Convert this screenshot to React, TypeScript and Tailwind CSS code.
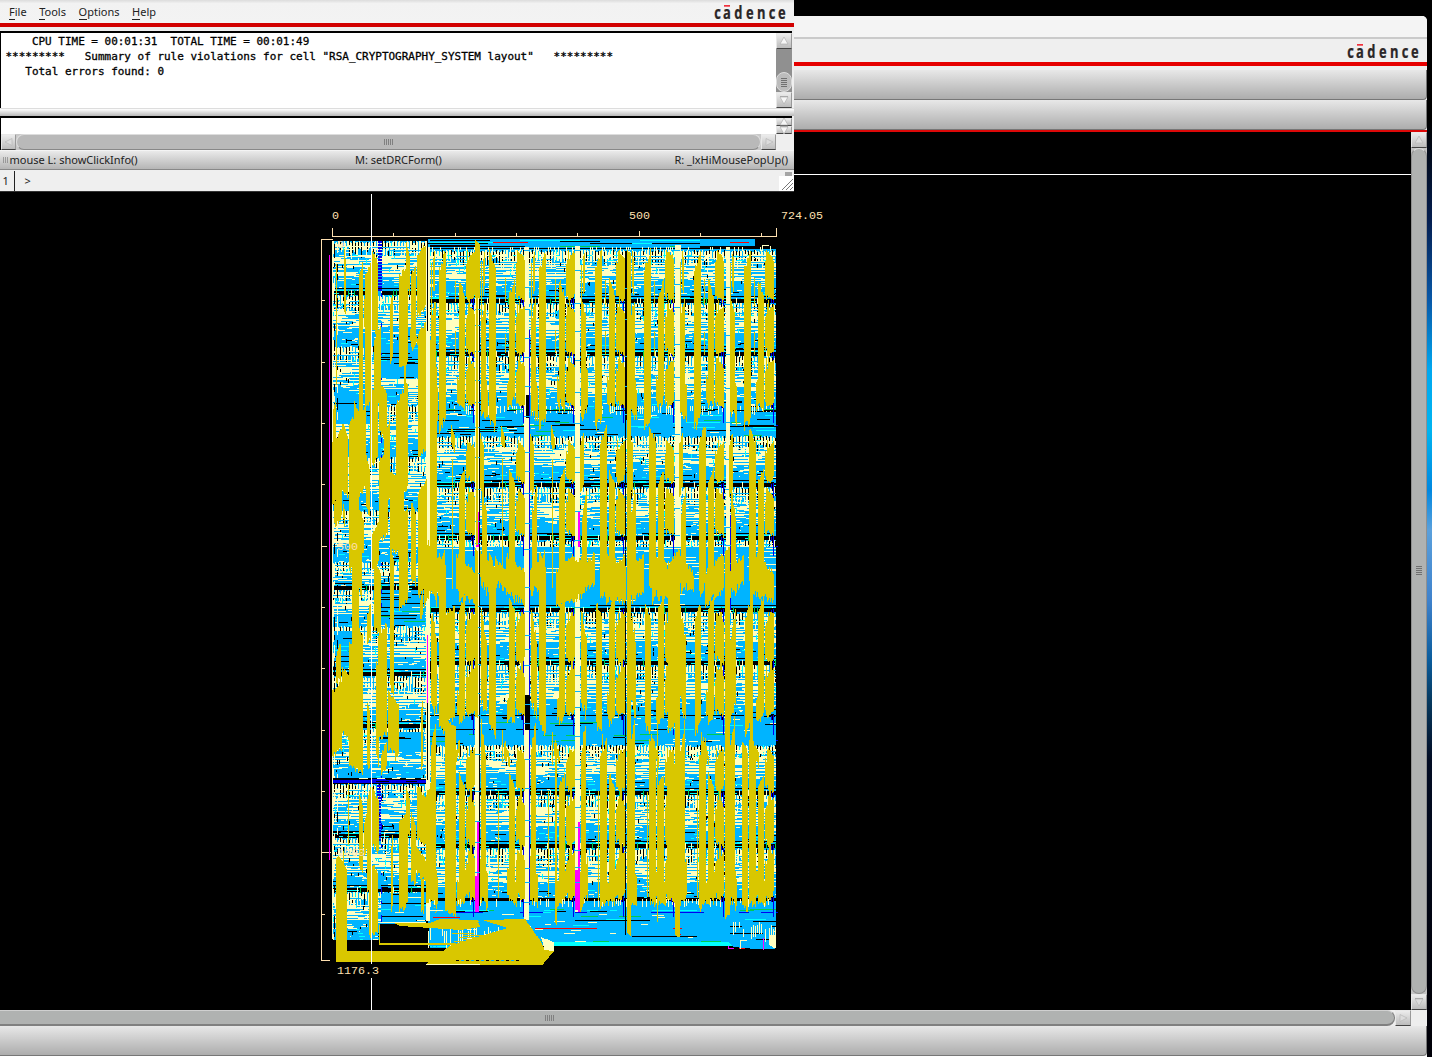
import React from "react";

const X0 = 318;
const Y0 = 226;
const W = 464;
const H = 744;

const NONE = 0, BLUE = 1, CREAM = 2, YEL = 3, CYAN = 4, BLACK = 5, GREEN = 6, NAVY = 7, MAG = 8, RED = 9, PEACH = 10;
const COLORS = ["", "#00b4ff", "#ffffc0", "#d9c700", "#00ffff", "#000000", "#00cc50", "#0000f0", "#ff00ff", "#ff0000", "#ffe0b0"];

function buildChip(): string[] {
  const g = new Uint8Array(W * H);
  let seed = 90210;
  const rnd = () => {
    seed = (seed * 1664525 + 1013904223) >>> 0;
    return seed / 4294967296;
  };
  const box = (x: number, y: number, w: number, h: number, c: number) => {
    for (let j = y; j < y + h; j++)
      for (let i = x; i < x + w; i++) {
        const a = i - X0, b = j - Y0;
        if (a >= 0 && b >= 0 && a < W && b < H) g[b * W + a] = c;
      }
  };
  const ri = (a: number, b: number) => Math.floor(a + rnd() * (b - a));
  const poly = (pts: number[][], c: number) => {
    const ys = pts.map((p) => p[1]);
    for (let y = Math.min(...ys); y <= Math.max(...ys); y++) {
      const xs: number[] = [];
      for (let k = 0; k < pts.length; k++) {
        const [ax, ay] = pts[k];
        const [bx, by] = pts[(k + 1) % pts.length];
        if (ay <= y + 0.5 !== by <= y + 0.5) xs.push(ax + ((y + 0.5 - ay) / (by - ay)) * (bx - ax));
      }
      xs.sort((p, q) => p - q);
      for (let k = 0; k + 1 < xs.length; k += 2) box(Math.round(xs[k]), y, Math.round(xs[k + 1] - xs[k]), 1, c);
    }
  };
  const runs = (xa: number, xb: number, y: number, p: number, c: number, lo: number, hi: number) => {
    let x = xa;
    while (x < xb) {
      const l = ri(lo, hi);
      if (rnd() < p) box(x, y, Math.min(l, xb - x), 1, c);
      x += l;
    }
  };
  // One standard-cell row: rail, vertical pins, then horizontal wiring.
  const cellRow = (xa: number, xb: number, y0: number, y1: number, rail: boolean) => {
    box(xa, y0, xb - xa, y1 - y0, BLUE);
    const h = y1 - y0;
    const pins = Math.min(14, Math.floor(h * 0.28));
    for (let x = xa; x < xb; x++) {
      const top = y0 + ri(0, 3);
      const len = ri(6, pins + 4);
      const c = x % 3 !== 1 ? CREAM : rnd() < 0.55 ? BLACK : rnd() < 0.15 ? CYAN : BLUE;
      box(x, top, 1, len, c);
      if (rnd() < 0.4) box(x, top + 4, 1, 3, CREAM);
    }
    for (let y = y0; y < y0 + h; y++) {
      const t = (y - y0) / h;
      if (t > 0.08 && t < 0.26) {
        if (y % 3 === 0) runs(xa, xb, y, 0.45, CREAM, 3, 12);
        if (y % 5 === 0) runs(xa, xb, y, 0.12, CYAN, 2, 6);
        if (y % 3 === 1) runs(xa, xb, y, 0.42, BLUE, 4, 20);
      } else if (t >= 0.26 && t < 0.64) {
        runs(xa, xb, y, y % 3 === 0 ? 0.24 : 0.76, CREAM, 5, 20);
      } else if (t >= 0.64 && t < 0.76) {
        runs(xa, xb, y, y % 2 ? 0.14 : 0.3, CREAM, 3, 13);
      } else if (t >= 0.76) {
        runs(xa, xb, y, 0.06, CREAM, 1, 6);
        runs(xa, xb, y, 0.04, BLACK, 3, 12);
        runs(xa, xb, y, 0.04, CYAN, 3, 9);
      }
    }
    for (let k = 0; k < (xb - xa) / 7; k++) {
      box(ri(xa, xb), ri(y0 + 8, y1 - 6), 1, ri(2, 5), BLACK);
      box(ri(xa, xb), ri(y0 + 5, y1 - 20), 1, ri(3, 6), k % 2 ? CYAN : CREAM);
    }
    if (rail) {
      runs(xa, xb, y0 - 7, 0.8, BLACK, 10, 40);
      box(xa, y0 - 4, xb - xa, 4, BLACK);
      runs(xa, xb, y0 - 5, 0.5, CYAN, 4, 14);
      runs(xa, xb, y0 - 2, 0.25, CYAN, 3, 10);
      for (let x = xa; x < xb; x += 3) if (rnd() < 0.3) box(x, y0 - 5, 1, 6, rnd() < 0.6 ? CREAM : GREEN);
    }
  };
  const route = (xa: number, xb: number, y0: number, y1: number, black: number) => {
    box(xa, y0, xb - xa, y1 - y0, BLUE);
    for (let y = y0; y < y1; y++) {
      if (rnd() < 0.6) runs(xa, xb, y, black, BLACK, 8, 38);
      if (rnd() < 0.3) runs(xa, xb, y, 0.07, CYAN, 6, 28);
      if (rnd() < 0.2) runs(xa, xb, y, 0.05, GREEN, 8, 26);
      runs(xa, xb, y, 0.02, CREAM, 3, 14);
    }
  };
  // Bundle of adjacent vertical wires with ragged ends.
  const spear = (x: number, w: number, y0: number, y1: number, rag = 18) => {
    const up = rnd() < 0.5;
    for (let i = 0; i < w; i++) {
      const e = (up ? i : w - 1 - i) / Math.max(1, w);
      const a = y0 + Math.floor(e * rag * 0.7 + rnd() * rag * 0.25);
      const b = y1 - Math.floor((1 - e) * rag * 0.45 + rnd() * rag * 0.35);
      box(x + i, a, 1, Math.max(1, b - a), YEL);
    }
  };

  // Left macro
  const L0 = 333, L1 = 426;
  const leftRows = [241, 295, 346, 405, 457, 510, 562, 590, 626, 676, 728, 784, 838, 892, 940];
  for (let i = 0; i + 1 < leftRows.length; i++) cellRow(L0, L1, leftRows[i], leftRows[i + 1], [1, 7, 9, 10, 12, 13].includes(i));
  route(379, 425, 346, 378, 0.16);
  route(333, 378, 392, 424, 0.14);
  route(380, 425, 590, 625, 0.15);
  route(333, 360, 632, 666, 0.2);
  route(380, 424, 732, 752, 0.08);
  route(381, 426, 893, 922, 0.12);
  for (let y = 378; y < 404; y++) if (y % 2) box(400 + ri(0, 10), y, 16, 1, CREAM);
  for (const x of [333, 334, 337]) for (let y = 244; y < 940; y += ri(8, 26)) box(x, y, 1, ri(4, 14), x === 333 ? CREAM : rnd() < 0.5 ? BLACK : CREAM);
  for (let y = 262; y < 920; y += ri(14, 34)) {
    box(378, y, 3, ri(2, 7), rnd() < 0.35 ? NAVY : BLUE);
    box(381, y + 3, 1, ri(2, 8), NAVY);
  }
  for (let y = 241; y < 290; y += 3) box(378, y, 4, 2, NAVY);
  box(332, 778, 95, 6, BLACK);
  box(332, 780, 94, 3, NAVY);
  box(372, 779, 14, 2, NAVY);
  runs(332, 426, 778, 0.4, CREAM, 3, 10);
  runs(332, 426, 781, 0.4, BLACK, 10, 26);
  for (let y = 785; y < 840; y += 3) box(377, y, 4, 2, NAVY);
  box(332, 241, 1, 698, CREAM);

  // Right array
  const R0 = 430, R1 = 776;
  box(428, 239, 348, 720 - 239, BLUE);
  box(428, 720, 348, 226, BLUE);
  box(426, 241, 4, 680, CREAM);
  box(427, 241, 1, 90, BLACK);
  box(427, 690, 1, 90, BLACK);
  cellRow(R0, R1, 250, 298, false);
  cellRow(R0, R1, 303, 351, true);
  cellRow(R0, R1, 356, 412, true);
  route(R0, R1, 408, 440, 0.09);
  for (let x = R0; x < R1; x += 2) {
    if (rnd() < 0.55) box(x, 406, 1, ri(5, 10), CREAM);
    if (rnd() < 0.5) box(x, 716, 1, ri(5, 10), CREAM);
  }
  runs(R0, R1, 410, 0.6, BLACK, 6, 20);
  runs(R0, R1, 409, 0.4, GREEN, 4, 14);
  cellRow(R0, R1, 436, 482, false);
  cellRow(R0, R1, 487, 535, true);
  cellRow(R0, R1, 540, 560, true);
  box(R0, 547, 346, 61, BLUE);
  for (let y = 548; y < 606; y += 2) runs(R0, R1, y, 0.07, CREAM, 8, 40);
  for (let y = 551; y < 570; y += 3) runs(580, R1, y, 0.4, CREAM, 8, 20);
  cellRow(R0, R1, 612, 660, true);
  cellRow(R0, R1, 665, 719, true);
  route(R0, R1, 719, 747, 0.09);
  runs(R0, R1, 715, 0.7, BLACK, 6, 20);
  cellRow(R0, R1, 745, 790, false);
  cellRow(R0, R1, 795, 843, true);
  cellRow(R0, R1, 848, 900, true);
  box(R0, 898, 346, 3, BLACK);
  for (let x = R0; x < R1; x += 2) if (rnd() < 0.5) box(x, 899, 1, ri(4, 11), CREAM);
  route(R0, R1, 907, 946, 0.02);
  runs(R0, R1, 910, 0.4, CYAN, 10, 24);
  runs(R0, R1, 912, 0.3, NAVY, 8, 16);
  runs(R0, R1, 911, 0.3, BLACK, 8, 20);
  box(575, 920, 75, 1, BLACK);
  box(632, 936, 65, 1, BLACK);
  box(535, 928, 62, 1, RED);
  box(673, 928, 9, 1, RED);
  box(676, 934, 5, 1, RED);

  // Top channel
  box(428, 239, 327, 8, BLUE);
  for (const [x, y, w, c] of [[430, 240, 60, BLACK], [438, 241, 50, BLUE], [430, 242, 90, CYAN], [493, 242, 35, RED], [430, 244, 70, BLUE], [430, 245, 50, BLACK], [430, 246, 95, BLACK], [560, 241, 40, BLACK], [590, 243, 110, BLACK], [632, 243, 20, CYAN], [640, 240, 60, CYAN], [730, 242, 19, RED], [520, 240, 60, CYAN], [430, 248, 346, BLACK], [560, 246, 120, GREEN], [600, 246, 70, BLUE], [428, 243, 60, BLACK]])
    box(x, y, w, 1, c);
  box(700, 246, 76, 3, BLACK);
  box(755, 239, 22, 8, BLACK);
  box(762, 245, 7, 1, CREAM);
  box(762, 245, 1, 5, CREAM);
  box(770, 246, 1, 5, CREAM);
  for (let x = 432; x < 776; x += 2) if (rnd() < 0.35) box(x, 247, 1, ri(3, 6), CREAM);

  // Power straps
  const strap = (x: number, w: number, a: number, b: number, c: number) => box(x, a, w, b - a, c);
  strap(475, 4, 248, 906, CREAM);
  strap(479, 1, 255, 906, BLACK);
  strap(524, 5, 247, 920, CREAM);
  strap(575, 5, 246, 912, CREAM);
  strap(675, 6, 245, 547, CREAM);
  strap(726, 4, 247, 550, CREAM);
  strap(625, 1, 250, 935, BLACK);
  strap(626, 2, 250, 420, BLACK);
  strap(529, 1, 330, 905, NAVY);
  strap(526, 3, 395, 418, BLACK);
  strap(525, 5, 695, 730, BLACK);
  strap(730, 1, 515, 610, NAVY);
  strap(730, 1, 820, 905, NAVY);
  strap(629, 1, 845, 910, NAVY);
  strap(476, 3, 512, 547, MAG);
  strap(578, 2, 512, 547, MAG);
  strap(477, 2, 822, 876, MAG);
  strap(475, 4, 876, 912, MAG);
  strap(578, 2, 822, 912, MAG);
  strap(575, 4, 870, 910, MAG);
  strap(427, 1, 635, 703, MAG);
  for (let k = 1; k <= 7; k++)
    for (const y of [299, 352, 404, 484, 537, 610, 662, 716, 793, 846, 898]) {
      const x = 424 + k * 50;
      box(x - 3, y - 2, 3, 6, BLACK);
      box(x - 1, y - 1, 1, 20, NAVY);
      box(x - 3, y, 1, 4, NAVY);
    }
  for (const x of [475, 524, 575, 625, 674, 725]) for (let y = 250; y < 905; y += ri(14, 40)) box(x, y, 6, 1, BLUE);

  // Vertical wire bundles of the array, repeated every 50 units
  for (let k = 0; k < 7; k++) {
    const p = 428 + k * 50 - (k > 3 ? 1 : 0);
    const late = k >= 3;
    spear(p + 3, 1, 262, 425);
    spear(p + 5, 2, 250, 300);
    spear(p + 4, 4, 296, 420, 30);
    spear(p + 3, 7, 365, 428, 30);
    spear(p + (late ? 17 : 11), 7, 248, 436, 30);
    spear(p + 27, 1, 278, 315);
    spear(p + 27, 1, 330, 365);
    spear(p + 31, 6, 278, 414, 24);
    spear(p + 29, 3, 374, 414);
    for (const [a, b] of [[250, 300], [304, 354], [358, 406], [440, 482], [488, 535], [612, 662], [666, 715], [748, 790], [796, 845], [850, 898]]) {
      spear(p + 38, 2, a + 10, b, 8);
      spear(p + 40, 7, a, b + 4, 14);
      spear(p + 42, 4, a + 4, b, 5);
      box(p + 39 + ri(0, 3), a, 1, b - a, YEL);
    }
    box(p + 41, 300, 1, 105, YEL);
    box(p + 43, 612, 2, 100, YEL);
    box(p + 42, 750, 2, 150, YEL);
    spear(p + 4, 5, 485, 600, 40);
    spear(p + 2, 4, 432, 500, 20);
    if (late) {
      spear(p + 22, 7, 425, 600, 25);
      spear(p + 22, 7, 738, 915, 25);
      spear(p + 18, 6, 600, 740, 25);
    } else {
      spear(p + 11, 7, 550, 740, 28);
      spear(p + 24, 1, 455, 600);
      spear(p + 23, 4, 425, 455);
    }
    spear(p + 31, 6, 468, 604, 20);
    spear(p + 2, 15, 550, 600, 30);
    spear(p + 28, 19, 552, 608, 26);
    spear(p + 31, 6, 595, 728, 20);
    spear(p + 3, 6, 606, 728, 45);
    spear(p + 29, 5, 690, 724, 14);
    spear(p + 3, 5, 715, 910, 50);
    spear(p + 2, 8, 855, 914, 28);
    spear(p + 31, 6, 772, 908, 20);
    spear(p + 29, 10, 868, 908, 20);
    spear(p + 20, 1, 790, 908);
    spear(p + 24, 1, 730, 775);
    if (k !== 3) spear(p + 26, 6, 738, 770, 24);
  }
  spear(439, 16, 605, 730, 18);
  spear(445, 11, 718, 918, 12);
  spear(475, 5, 240, 300, 6);
  spear(476, 2, 290, 548, 6);
  spear(475, 3, 548, 720, 6);
  spear(430, 7, 340, 610, 40);
  spear(428, 18, 545, 605, 26);
  spear(495, 15, 555, 600, 30);
  spear(558, 25, 555, 608, 20);
  spear(600, 26, 550, 606, 20);
  spear(627, 4, 250, 937, 6);
  spear(632, 12, 555, 604, 20);
  spear(668, 12, 548, 735, 20);
  spear(675, 5, 720, 938, 4);
  spear(667, 9, 755, 905, 16);
  spear(725, 5, 545, 920, 10);
  spear(657, 1, 700, 932);
  spear(652, 3, 430, 610);
  spear(652, 3, 735, 910);
  spear(701, 3, 425, 600);
  spear(701, 3, 735, 905);
  spear(742, 6, 740, 915, 16);
  spear(750, 3, 450, 905, 10);
  spear(555, 2, 740, 926, 6);

  // Vertical wires of the left macro
  const lw: number[][] = [
    [344, 2, 248, 322], [336, 1, 262, 400], [359, 4, 262, 500], [364, 3, 290, 330], [365, 6, 262, 415], [372, 6, 248, 342], [374, 7, 325, 412],
    [390, 3, 292, 370], [399, 9, 262, 374], [404, 2, 340, 470], [406, 4, 242, 300], [411, 5, 262, 355], [417, 9, 242, 320], [418, 8, 320, 460],
    [410, 14, 328, 352], [361, 5, 400, 498], [370, 8, 380, 470], [379, 8, 380, 445], [333, 3, 400, 470], [332, 10, 428, 510], [342, 6, 420, 500],
    [349, 10, 408, 575], [354, 5, 400, 440], [334, 8, 488, 530], [343, 2, 500, 530], [352, 7, 550, 660], [357, 5, 500, 600], [361, 3, 510, 560],
    [366, 4, 455, 520], [367, 5, 600, 650], [371, 8, 520, 575], [374, 7, 560, 640], [379, 9, 445, 545], [384, 6, 420, 510], [390, 14, 470, 560], [390, 4, 545, 700],
    [399, 9, 505, 612], [403, 5, 380, 500], [396, 7, 390, 500], [411, 5, 500, 590], [418, 9, 478, 600], [424, 5, 540, 610], [420, 3, 590, 625],
    [332, 10, 678, 760], [342, 8, 665, 745], [349, 14, 640, 778], [355, 8, 620, 700], [367, 3, 700, 775], [378, 9, 622, 745], [376, 3, 660, 770],
    [381, 6, 740, 780], [388, 11, 690, 760], [336, 5, 640, 690], [395, 1, 720, 775], [421, 2, 700, 775],
    [348, 1, 780, 860], [359, 4, 792, 880], [364, 4, 810, 860], [372, 7, 786, 858], [367, 4, 785, 900], [369, 9, 858, 940], [391, 2, 835, 918],
    [399, 9, 808, 916], [406, 4, 784, 840], [411, 5, 812, 892], [417, 9, 784, 850], [415, 12, 845, 885], [421, 3, 870, 922], [426, 6, 780, 910],
    [432, 5, 900, 905], [342, 2, 850, 950],
  ];
  lw.forEach(([x, w, a, b]) => spear(x, w, a, b, 20));

  // Pad routing along the bottom edge
  box(380, 924, 49, 27, BLACK);
  route(430, 535, 922, 948, 0.04);
  for (let x = 428; x < 536; x += 2) box(x, 926 + ri(0, 6), 1, ri(8, 28), rnd() < 0.45 ? CREAM : BLUE);
  box(332, 940, 48, 11, BLACK);
  box(380, 938, 48, 12, BLACK);
  box(545, 946, 220, 24, BLACK);
  spear(369, 9, 870, 940, 22);
  poly([[339, 856], [343, 862], [347, 870], [347, 958], [336, 958], [336, 858]], YEL);
  box(336, 951, 210, 9, YEL);
  box(336, 960, 100, 2, YEL);
  box(379, 925, 1, 20, YEL);
  box(380, 943, 76, 2, YEL);
  poly([[394, 923], [430, 923], [440, 919], [478, 920], [480, 927], [460, 930], [400, 926]], YEL);
  poly([[482, 920], [525, 919], [533, 930], [544, 947], [552, 952], [542, 965], [425, 965], [430, 960], [450, 946], [470, 939], [508, 928]], YEL);
  for (let y = 933; y < 951; y += 2) box(444 + ri(0, 24), y, ri(20, 50), 1, YEL);
  poly([[541, 937], [554, 942], [554, 952], [546, 956], [543, 944]], CREAM);
  poly([[543, 950], [554, 951], [542, 965], [530, 965]], YEL);
  box(426, 964, 54, 1, CREAM);
  box(433, 917, 27, 1, RED);
  for (let x = 456; x < 520; x += 5) box(x, 960, 3, 1, x % 2 ? BLUE : BLACK);
  box(554, 942, 212, 4, CYAN);
  route(730, 776, 920, 940, 0.22);
  for (let x = 733; x < 776; x += 2) if (rnd() < 0.5) box(x, 922 + ri(0, 8), 1, ri(6, 14), CREAM);
  box(769, 935, 7, 13, CREAM);
  poly([[728, 942], [765, 942], [776, 949], [755, 949], [734, 947]], BLUE);
  box(728, 946, 1, 3, MAG);
  box(728, 948, 6, 1, MAG);
  box(739, 948, 6, 1, RED);
  box(740, 941, 1, 8, CREAM);
  box(763, 938, 1, 12, MAG);
  for (const y of [425, 546, 740, 912]) box(776, y, 2, 1, NAVY);

  // Rulers
  box(332, 236, 445, 1, PEACH);
  box(332, 237, 445, 2, NONE);
  for (const x of [393, 455, 516, 577, 700, 761]) box(x, 233, 1, 4, PEACH);
  box(639, 231, 1, 6, PEACH);
  box(332, 228, 1, 9, PEACH);
  box(776, 228, 1, 9, PEACH);
  box(321, 239, 1, 722, PEACH);
  box(321, 239, 12, 1, PEACH);
  box(321, 960, 9, 1, PEACH);
  for (const y of [300, 362, 423, 484, 607, 668, 730, 791, 914]) box(321, y, 4, 1, PEACH);
  box(321, 546, 6, 1, PEACH);
  box(321, 852, 10, 1, PEACH);
  box(329, 255, 1, 605, MAG);

  const out: string[][] = COLORS.map(() => []);
  for (let y = 0; y < H; y++) {
    let x = 0;
    while (x < W) {
      const c = g[y * W + x];
      let e = x + 1;
      while (e < W && g[y * W + e] === c) e++;
      if (c !== NONE && c !== BLACK) out[c].push(`M${x} ${y}h${e - x}v1h-${e - x}z`);
      x = e;
    }
  }
  return out.map((a) => a.join(""));
}

const CHIP = buildChip();

const btn = "flex shrink-0 items-center justify-center border border-[#e8e8e8] border-b-[#444] border-r-[#999] bg-linear-to-b from-[#ececec] to-[#bcbcbc]";

function Arrow({ dir, faint }: { dir: "up" | "down" | "left" | "right"; faint?: boolean }) {
  const d = { up: "M1 8L5 1L9 8z", down: "M1 2L5 9L9 2z", left: "M8 1.5L1 5L8 8.5z", right: "M2 1.5L9 5L2 8.5z" }[dir];
  return (
    <svg width="10" height="10" viewBox="0 0 10 10" className="shrink-0">
      <path d={d} fill={faint ? "#dcdcdc" : "#f6f6f6"} stroke={faint ? "#b8b8b8" : "#b0b0b0"} strokeWidth="0.7" />
      {dir === "down" && <path d="M1 1.5H9" stroke="#aaa" strokeWidth="1" />}
    </svg>
  );
}

function Grip({ vertical }: { vertical?: boolean }) {
  const lines = [0, 1, 2, 3, 4];
  return vertical ? (
    <div className="flex w-[6px] flex-col gap-px">
      {lines.map((i) => <i key={i} className="h-px w-full bg-[#707070]" />)}
    </div>
  ) : (
    <div className="flex h-[6px] gap-px">
      {lines.map((i) => <i key={i} className="h-full w-px bg-[#808080]" />)}
    </div>
  );
}

function Logo() {
  return (
    <svg width="75" height="23" viewBox="0 0 75 23" className="block shrink-0 overflow-visible">
      <g transform="scale(0.74 1)">
        {["c", "a", "d", "e", "n", "c", "e"].map((c, i) => (
          <text key={i} x={[1.6, 13.4, 28.6, 44.6, 59.4, 75.2, 88][i]} y="19" fontFamily="Open Sans" fontWeight="700" fontSize="17.5" fill="#2b2627" stroke="#2b2627" strokeWidth="0.25">{c}</text>
        ))}
      </g>
      <rect x="11" y="5" width="6" height="1.7" fill="#f0303c" />
    </svg>
  );
}

function MenuItem({ label }: { label: string }) {
  return (
    <span className="leading-[14px]">
      <span className="border-b border-[#222]">{label[0]}</span>
      {label.slice(1)}
    </span>
  );
}

const rulerText = "absolute whitespace-pre font-['Liberation_Mono'] text-[11.7px] leading-[14px] text-[#ffe0b0]";

function LayoutCanvas() {
  return (
    <div className="relative h-[878px] w-[1411px] overflow-hidden bg-black">
      <svg className="absolute left-[318px] top-[94px]" width={W} height={H} viewBox={`0 0 ${W} ${H}`} shapeRendering="crispEdges">
        {CHIP.map((d, i) => (d ? <path key={i} d={d} fill={COLORS[i]} /> : null))}
      </svg>
      <div className="absolute left-0 top-[42px] h-px w-[1411px] bg-white" />
      <div className="absolute left-[371px] top-[62px] h-[816px] w-px bg-white" />
      <span className={`${rulerText} left-[332px] top-[77px]`}>0</span>
      <span className={`${rulerText} left-[629px] top-[77px]`}>500</span>
      <span className={`${rulerText} left-[781px] top-[77px]`}>724.05</span>
      <span className={`${rulerText} left-[337px] top-[106px]`}>0</span>
      <span className={`${rulerText} left-[337px] top-[408px]`}>500</span>
      <span className={`${rulerText} left-[337px] top-[714px]`}>1000</span>
      <span className={`${rulerText} left-[337px] top-[832px] bg-black`}>1176.3</span>
    </div>
  );
}

const bar = "h-[30px] shrink-0 rounded-br border-b border-r border-[#777] bg-linear-to-b from-[#e8e8e8] to-[#adadad]";

function EditorWindow() {
  return (
    <div className="flex w-[1427px] flex-col overflow-hidden rounded-tr-[5px] bg-[#eeeeee]">
      <div className="h-[23px] border-b-2 border-[#cacaca] bg-[#f4f4f4]" />
      <div className="flex h-[23px] items-center justify-end bg-[#efefef] pr-[6px]"><Logo /></div>
      <div className="h-1 bg-[#e60000]" />
      <div className="h-1 bg-[#eeeeee]" />
      <div className={bar} />
      <div className={bar} />
      <div className="h-[2px] bg-[#dd0808]" />
      <div className="flex h-[878px]">
        <LayoutCanvas />
        <div className="flex w-4 flex-col bg-[#c4c4c4]">
          <div className={`${btn} h-4`}><Arrow dir="up" faint /></div>
          <div className="flex flex-1 items-center justify-center rounded-lg border border-[#909090] border-t-[#dcdcdc] bg-[#b0b2b1] pb-[2px]"><Grip vertical /></div>
          <div className={`${btn} h-4`}><Arrow dir="down" faint /></div>
        </div>
      </div>
      <div className="flex h-4">
        <div className="flex w-[1395px] items-center rounded-r-lg border-b-2 border-r border-t border-[#808080] border-t-[#d0d0d0] bg-[#b0b2b1] pl-[545px]"><Grip /></div>
        <div className={`${btn} w-4`}><Arrow dir="right" faint /></div>
      </div>
      <div className={bar} />
      <div className="h-px bg-white" />
    </div>
  );
}

const LOG = [
  "    CPU TIME = 00:01:31  TOTAL TIME = 00:01:49",
  '*********   Summary of rule violations for cell "RSA_CRYPTOGRAPHY_SYSTEM layout"   *********',
  "   Total errors found: 0",
];

function LogWindow() {
  return (
    <div className="absolute left-0 top-0 flex h-[192px] w-[794px] flex-col bg-[#efefef] font-['Noto_Sans'] text-[11px] text-[#222]">
      <div className="flex h-[23px] shrink-0 items-center justify-between bg-linear-to-b from-[#dcdcdc] via-[#f2f2f2] via-15% to-[#f3f3f3] pl-[9px] pr-[6px]">
        <div className="flex gap-[12.6px] pt-px">
          <MenuItem label="File" />
          <MenuItem label="Tools" />
          <MenuItem label="Options" />
          <MenuItem label="Help" />
        </div>
        <Logo />
      </div>
      <div className="h-1 shrink-0 bg-[#d20000]" />
      <div className="h-1 shrink-0 bg-[#eeeeee]" />
      <div className="mr-[2px] flex h-[77px] shrink-0 border-l border-t-2 border-black bg-white">
        <div className="flex-1 overflow-hidden whitespace-pre pl-[4.5px] pt-px font-['DejaVu_Sans_Mono'] text-[10.97px] leading-[15px] text-black [-webkit-text-stroke:0.3px_#000]">
          {LOG.map((l) => <div key={l}>{l}</div>)}
        </div>
        <div className="flex w-4 flex-col bg-[#909090]">
          <div className={`${btn} h-4`}><Arrow dir="up" /></div>
          <div className="flex-1" />
          <div className="flex h-5 items-center justify-center rounded-lg border border-[#ddd] bg-[#bcbcbc]"><Grip vertical /></div>
          <div className={`${btn} h-4`}><Arrow dir="down" /></div>
        </div>
      </div>
      <div className="h-2 shrink-0 border-t border-[#ddd] bg-linear-to-b from-white to-[#b8b8b8]" />
      <div className="mr-[2px] flex h-[34px] shrink-0 border-l border-t-2 border-black">
        <div className="flex w-[775px] flex-col">
          <div className="flex-1 bg-white" />
          <div className="flex h-4 bg-[#c8c8c8]">
            <div className={`${btn} w-[15px]`}><Arrow dir="left" faint /></div>
            <div className="flex flex-1 items-center justify-center rounded-lg border border-[#ddd] border-b-[#888] bg-[#b9b9b9]"><Grip /></div>
            <div className={`${btn} w-[15px]`}><Arrow dir="right" faint /></div>
          </div>
        </div>
        <div className="flex w-4 flex-col">
          <div className={`${btn} h-2`}><Arrow dir="up" /></div>
          <div className={`${btn} h-2`}><Arrow dir="down" /></div>
        </div>
      </div>
      <div className="flex h-5 shrink-0 items-center border-b border-t border-[#888] border-t-[#f4f4f4] bg-linear-to-b from-[#eaeaea] to-[#b5b5b5] pl-[3px] pr-[6px] text-[#222]">
        <div className="flex h-[6px] gap-px opacity-60"><i className="w-px bg-[#777]" /><i className="w-px bg-[#777]" /><i className="w-px bg-[#777]" /></div>
        <span className="w-[347px] pl-[1.5px]">mouse L: showClickInfo()</span>
        <span className="flex-1">M: setDRCForm()</span>
        <span>R: _lxHiMousePopUp()</span>
      </div>
      <div className="flex flex-1 items-center border-b border-[#333] bg-[#efefef] pt-px">
        <span className="flex h-full w-[15px] items-center border-r border-[#222] pl-[2.5px]">1</span>
        <span className="pl-[9.5px]">&gt;</span>
        <div className="ml-auto flex h-full flex-col items-center">
          <div className="ml-1 mt-px h-1 w-[7px] shrink-0 bg-[#a5a5a5]" />
          <svg width="15" height="15" viewBox="0 0 15 15" className="shrink-0">
            <rect width="15" height="15" fill="#fff" />
            <path d="M3 14L14 3M7 14L14 7M11 14L14 11" stroke="#777" strokeWidth="1" />
          </svg>
        </div>
      </div>
    </div>
  );
}

export default function App() {
  return (
    <div className="relative h-[1057px] w-[1432px] overflow-hidden bg-black bg-[linear-gradient(to_bottom,#000_0,#000_120px,#041e50_220px,#0858a8_300px,#00a8f0_370px,#00b4f0_430px,#0088e0_490px,#5aa0dc_530px,#3f82cc_600px,#0a5c9c_660px,#063a60_700px,#020c24_760px,#000008_1000px)] pt-4">
      <EditorWindow />
      <LogWindow />
    </div>
  );
}
